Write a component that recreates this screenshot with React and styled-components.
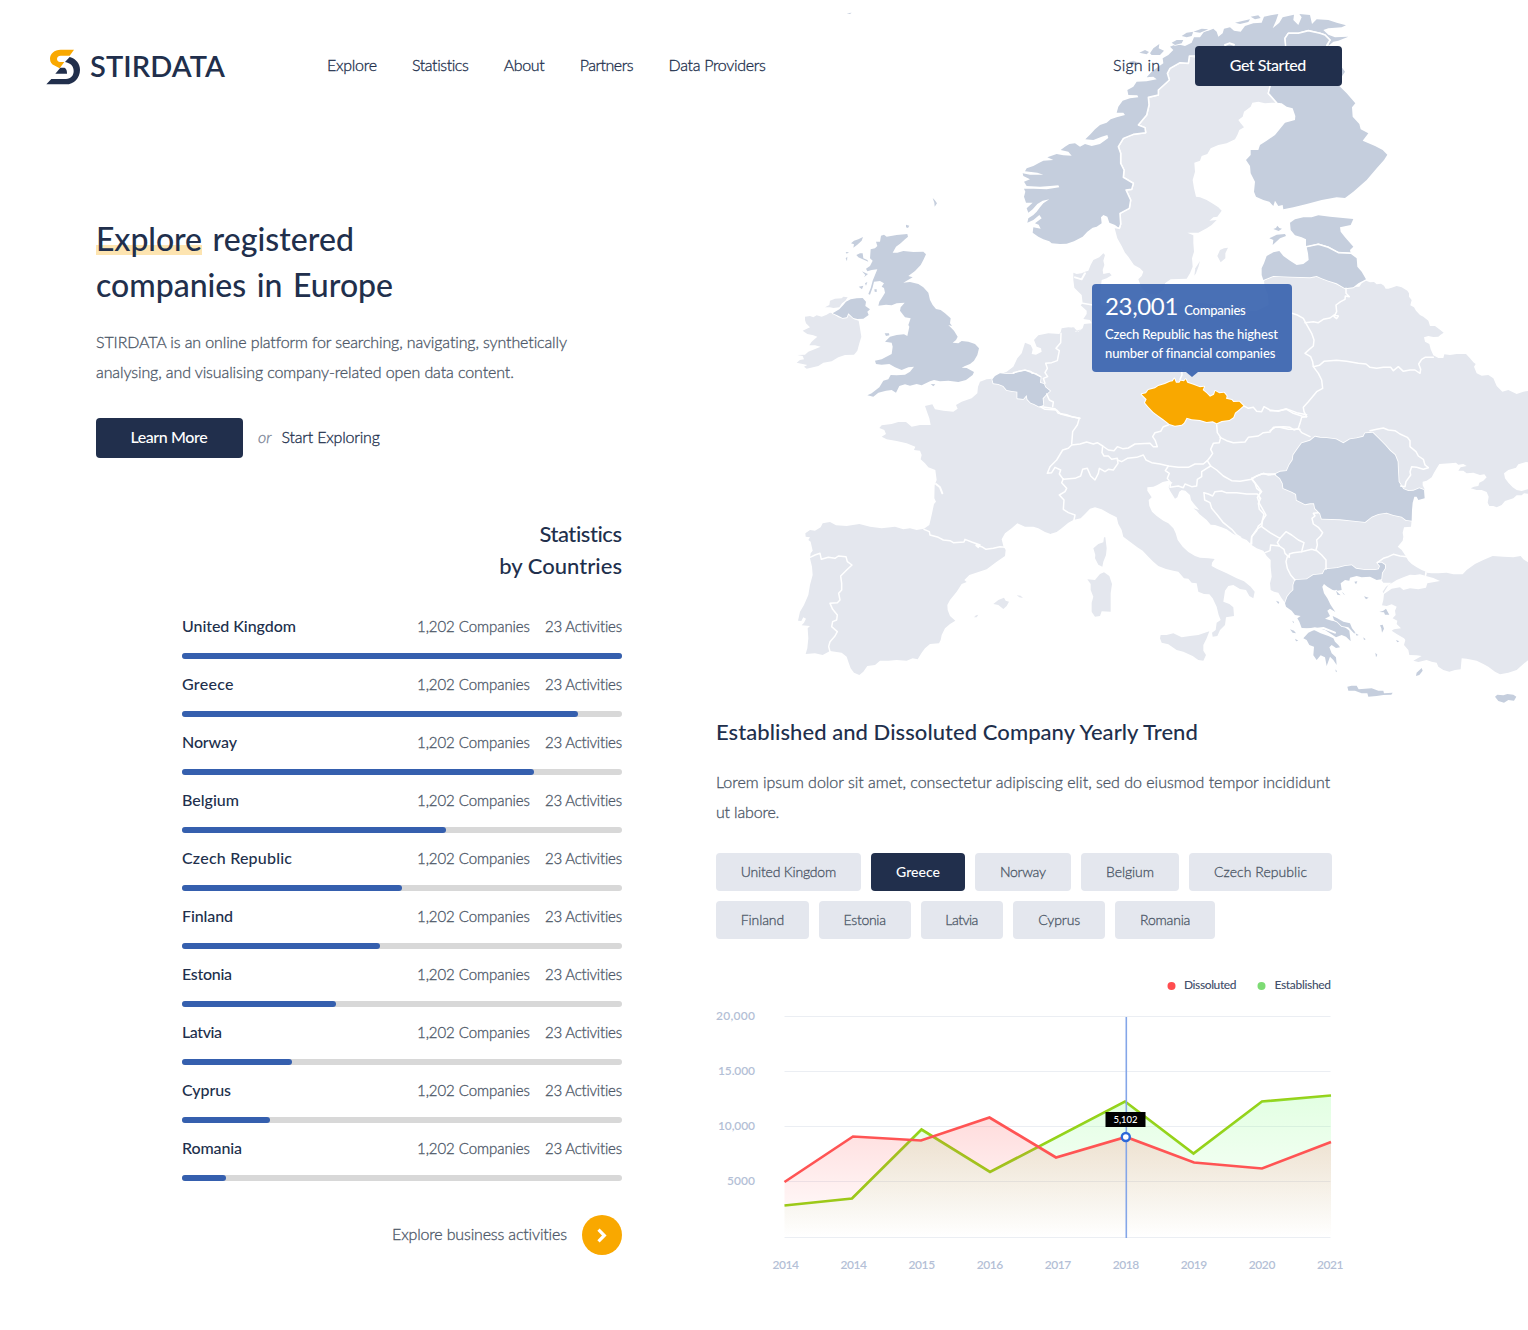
import React from "react";
import styled, { createGlobalStyle } from "styled-components";

const color = {
  navy: "#212f4c",
  body: "#4d5868",
  blue: "#355fae",
  orange: "#f9a800",
  land: "#e4e7ee",
  member: "#c5cedd",
  track: "#d8d8d8",
  axis: "#b4bfd6",
};

const GlobalStyle = createGlobalStyle`
  * { box-sizing: border-box; }
  body {
    margin: 0;
    background: #fff;
    color: ${color.navy};
    font-family: Lato, "Open Sans", sans-serif;
    font-variant-ligatures: none;
  }
  h1, h2, p, ul { margin: 0; padding: 0; }
  ul { list-style: none; }
`;

/* ---------- shared ---------- */

const Page = styled.div`
  position: relative;
  width: 1528px;
  height: 1330px;
  overflow: hidden;
`;

const Tracked = styled.span`
  letter-spacing: ${(p) => p.$ls || 0}px;
  margin-right: ${(p) => -(p.$ls || 0)}px;
  white-space: nowrap;
`;

const Button = styled.button`
  width: 147px;
  height: 40px;
  padding: 0 1px 2px 0;
  border: 0;
  border-radius: 4px;
  background: ${color.navy};
  color: #fff;
  font: 500 16px/38px Lato, sans-serif;
`;

const TextLink = styled.a`
  height: 40px;
  color: ${color.navy};
  font-size: 16px;
  font-weight: 300;
  line-height: 38px;
  -webkit-text-stroke: 0.3px ${color.navy};
`;

const Paragraph = styled.p`
  color: ${color.body};
  font-size: 16px;
  font-weight: 300;
  line-height: 30px;
  -webkit-text-stroke: 0.3px ${color.body};
`;

const SectionTitle = styled.h2`
  font-size: 22px;
  font-weight: 500;
  line-height: 32px;
  text-align: ${(p) => p.$align || "left"};
`;

/* ---------- header ---------- */

const Header = styled.header`
  position: relative;
  display: flex;
  align-items: center;
  height: 86px;
  padding: 46px 186px 0 46px;
`;

const Brand = styled.div`
  display: flex;
  align-items: center;
  width: 281px;
  height: 40px;
`;

const Mark = styled.svg`
  margin-top: 1px;
`;

const Wordmark = styled.span`
  margin-left: 9px;
  font-size: 29px;
  font-weight: 600;
  line-height: 40px;
`;

const Nav = styled.nav`
  display: flex;
  gap: 35px;
`;

const Account = styled.div`
  display: flex;
  align-items: center;
  gap: 35px;
  margin-left: auto;
`;

/* ---------- body ---------- */

const Main = styled.main`
  position: relative;
  display: grid;
  grid-template-columns: 526px 616px;
  column-gap: 94px;
  padding-left: 96px;
`;

const LeftColumn = styled.div`
  padding-top: 130px;
`;

const RightColumn = styled.section`
  padding-top: 630px;
`;

const HeroTitle = styled.h1`
  margin-bottom: 19px;
  font-size: 32px;
  font-weight: 500;
  line-height: 46px;
  word-spacing: 2.5px;
`;

const Highlight = styled.span`
  background: linear-gradient(#fde4b0, #fde4b0) 0 26px / 100% 10px no-repeat;
`;

const HeroActions = styled.div`
  display: flex;
  align-items: center;
  margin-top: 31px;
`;

const Or = styled.em`
  height: 40px;
  margin: 0 10px 0 15px;
  color: #7b8496;
  font-size: 16px;
  font-weight: 300;
  line-height: 38px;
  -webkit-text-stroke: 0.3px #7b8496;
`;

const Statistics = styled.section`
  width: 440px;
  margin: 60px 0 0 86px;
`;

const CountryList = styled.ul`
  margin-top: 29px;
`;

const CountryItem = styled.li`
  height: 58px;
`;

const CountryHead = styled.div`
  display: flex;
  justify-content: space-between;
  height: 30px;
  line-height: 30px;
`;

const CountryName = styled.span`
  font-size: 16px;
  font-weight: 500;
`;

const CountryMeta = styled.span`
  display: flex;
  gap: 15px;
  color: ${color.body};
  font-size: 15px;
  font-weight: 300;
  -webkit-text-stroke: 0.3px ${color.body};
`;

const Track = styled.div`
  height: 6px;
  margin-top: 12px;
  border-radius: 3px;
  background: ${color.track};
`;

const Fill = styled.div`
  height: 6px;
  border-radius: 3px;
  background: ${color.blue};
`;

const ExploreMore = styled.div`
  display: flex;
  justify-content: flex-end;
  gap: 15px;
  margin-top: 24px;
  color: ${color.body};
  font-size: 16px;
  font-weight: 300;
  line-height: 38px;
  -webkit-text-stroke: 0.3px ${color.body};
`;

const RoundButton = styled.button`
  display: grid;
  place-items: center;
  width: 40px;
  height: 40px;
  padding: 0;
  border: 0;
  border-radius: 50%;
  background: ${color.orange};
`;

const TrendText = styled(Paragraph)`
  margin: 19px 0 26px;
`;

const Chips = styled.div`
  display: flex;
  flex-wrap: wrap;
  gap: 10px;
`;

const Chip = styled.button`
  width: ${(p) => p.$width}px;
  height: 38px;
  padding: 0;
  border: 0;
  border-radius: 4px;
  background: ${(p) => (p.$active ? color.navy : color.land)};
  color: ${(p) => (p.$active ? "#fff" : color.body)};
  font: ${(p) => (p.$active ? 500 : 300)} 14px/38px Lato, sans-serif;
  -webkit-text-stroke: ${(p) => (p.$active ? "0" : `0.3px ${color.body}`)};
`;

const ChartSvg = styled.svg`
  display: block;
  margin-top: 21px;
  overflow: visible;
  font-family: Lato, sans-serif;
`;

/* ---------- map ---------- */

const MapLayer = styled.div`
  position: absolute;
  top: 0;
  left: 780px;
  width: 748px;
  height: 710px;
`;

const MapTooltip = styled.div`
  position: absolute;
  top: 284px;
  left: 312px;
  width: 200px;
  height: 88px;
  padding: 7px 13px 0;
  border-radius: 4px;
  background: rgba(53, 96, 173, 0.9);
  color: #fff;
  font-size: 13px;
  font-weight: 500;
  line-height: 19px;

  &::after {
    content: "";
    position: absolute;
    top: 88px;
    left: 94px;
    border: 6px solid transparent;
    border-top: 5px solid rgba(53, 96, 173, 0.9);
    border-bottom: 0;
  }
`;

const TooltipHead = styled.div`
  height: 34px;
  line-height: 29px;
  white-space: nowrap;
`;

const TooltipFigure = styled.span`
  margin-right: 6px;
  font-size: 24px;
  font-weight: 400;
`;

// Map tiles: each outline is listed in the local units (1/3 px) of its region.
const TILES = {
  nordic: [660, 0],
  isles: [0, 570],
  central: [780, 720],
  east: [1470, 600],
  iberia: [0, 1260],
  italy: [780, 1260],
  balkans: [1410, 1260],
};

const points = (...parts) =>
  parts
    .map(([tile, list]) => {
      const [dx, dy] = TILES[tile];
      return list
        .trim()
        .split(/\s+/)
        .map((pair) => {
          const [x, y] = pair.split(",").map(Number);
          return `${x + dx},${y + dy}`;
        })
        .join(" ");
    })
    .join(" ");

const MAINLAND = points(
  ["central", "128,190 125,165 118,158 103,143 100,120 100,98 110,102 125,100 135,95 145,92 152,75 160,60 178,52 190,40 195,45 190,62 193,75 188,90 190,102 208,98 215,106 200,115 185,120 183,138 180,165 184,195 230,205 300,200 330,222 380,215 430,196 480,188 540,196 600,215 650,212 686,195 684,165 674,140 672,122 700,108 740,107 790,110"],
  ["east", "100,230 135,232 145,226 155,236 185,245 205,256 225,266 240,261 268,260 275,250 288,242 300,247 312,246 320,253 333,251 342,257 347,266 355,266 365,263 380,258 395,262 412,272 417,280 417,290 425,300 421,316 432,322 438,332 450,345 460,350 475,362 480,378 495,378 508,388 521,398 512,404 505,410 490,411 475,408 462,412 465,425 478,432 482,448 490,466 505,474 520,474 523,463 540,465 560,462 588,462 600,475 610,487 617,492 612,500 620,520 635,527 655,525 670,535 680,558 697,575 715,570 740,582 760,575 780,572 780,788 768,786 745,793 738,803 715,810 702,820 705,835 715,848 728,862 740,870 755,873 780,866"],
  ["balkans", "840,222 822,220 815,226 800,226 790,235 765,243 755,255 740,262 730,258 718,258 713,248 716,230 710,216 695,210 680,210 662,205 672,200 685,198 688,188 700,182 710,172 703,163 690,165 670,158 650,160 640,152 625,152 632,142 650,138 640,132 625,134 618,128 600,130 568,132 560,145 552,158 545,172 530,182 518,185 518,196 524,208 524,235 505,240 500,232 494,230 488,248 486,270 485,300 483,320 462,322 458,338 460,350 458,362 443,380 455,390 465,405 475,422 485,432 500,442 515,450 530,456 526,467 510,463 495,465 480,464 460,472 440,480 415,496 400,520 398,515 408,500 425,488 400,488 388,472 340,460 300,465 230,480 150,560 105,548 95,535 85,518 72,515 62,510 60,490 65,470 62,440 62,420 50,408 40,392 20,385 5,375"],
  ["italy", "620,360 600,352 580,342 560,328 545,322 525,315 512,314 500,300 478,282 470,272 460,265 478,270 462,252 453,240 450,225 436,212 425,210 418,215 412,232 405,236 398,225 390,212 386,202 388,195 398,188 385,182 368,186 352,195 340,200 322,202 322,212 335,232 326,240 328,258 336,275 350,288 370,302 385,310 400,325 407,340 413,360 428,380 445,396 465,408 480,413 505,415 524,417 516,428 515,438 530,446 560,460 590,475 612,484 632,500 644,515 640,535 628,528 618,510 600,507 580,495 565,498 555,512 550,545 568,552 580,562 582,588 558,592 555,615 540,630 532,648 518,650 516,638 527,630 530,608 542,600 536,585 530,560 518,535 508,523 492,522 475,515 470,490 455,488 445,476 432,475 415,455 400,452 378,447 355,438 340,425 325,410 308,392 292,382 270,365 250,350 245,330 235,312 230,292 210,282 185,268 165,262 150,266 135,282 122,295 100,300 85,308 65,325 50,336 30,342"],
  ["iberia", "812,342 795,336 775,325 760,320 735,320 712,310 695,325 675,340 665,358 670,378 677,390 675,408 650,425 620,448 595,456 568,465 553,480 560,486 545,492 530,515 510,540 502,555 503,570 510,588 526,602 510,612 495,625 485,645 482,660 477,670 450,672 435,685 425,698 413,718 398,715 380,722 350,720 325,722 300,722 285,735 262,738 250,755 238,765 222,758 212,745 205,725 200,710 185,698 150,693 128,705 105,700 77,702 82,685 85,655 83,625 90,618 65,616 72,608 78,596 70,592 64,603 54,602 60,575 72,555 85,525 90,495 98,465 96,440 90,415 92,400 98,392 92,365 85,360 90,352 77,350 76,340 90,330 105,332 122,322 128,310 150,306 168,316 200,318 238,312 270,320 305,325 345,320 370,328 390,325 410,330 432,326 448,315 455,285 462,252 468,245 463,235 464,195 470,180 466,150 445,142 435,130 422,118 425,105 420,92 402,90 406,80 380,70 350,63 320,58 305,50 318,42 313,30 298,24 305,16 335,12 355,6 378,6 395,20 420,15 452,15"],
  ["isles", "452,705 448,685 442,668 435,648 457,643 465,658 490,662 520,665 533,656 528,645 545,635 575,625 592,610 594,590 600,575 620,568 637,566 655,555 680,545 700,530 712,505 725,490 735,458 752,465 758,478 755,492 768,494 785,485 783,475 770,470 762,450 775,436 805,430 838,432 850,414 870,415 880,412 895,425 905,418"],
  ["central", "60,285 65,265 85,262 104,263 106,275 118,272 128,265 132,252 155,250 150,240 130,237 140,222 140,212 122,196"]
);

const LIGHT_SHAPES = [
  // Sweden
  points(["nordic", "860,100 700,140 620,150 585,170 568,168 565,190 540,188 510,205 502,220 508,240 475,270 475,285 445,292 447,315 440,345 415,375 435,383 437,398 400,403 370,415 355,440 362,460 362,490 372,510 370,532 400,550 395,568 378,570 392,600 388,625 360,640 362,672 358,685 344,685 352,715 365,738 375,758 385,770 402,795 420,805 430,815 425,828 415,838 424,862 440,880 470,885 492,868 495,850 512,838 560,836 570,820 578,800 576,775 582,755 580,728 580,706 562,698 595,698 620,685 635,675 650,660 628,662 640,652 652,650 665,632 655,622 640,612 620,600 600,592 588,590 582,565 578,540 585,515 583,488 600,482 605,468 622,462 632,445 655,435 680,430 705,418 712,405 718,390 732,382 722,370 715,360 728,350 732,335 752,320 757,308 775,305 795,310 815,308 832,308 855,250 850,180"]),
  // Ireland
  points(["isles", "75,380 90,378 100,382 110,376 125,380 140,374 150,368 158,370 175,382 190,385 205,372 222,388 236,392 240,415 244,440 238,460 232,482 222,494 195,495 175,502 155,514 130,518 115,528 80,536 72,530 82,525 50,518 60,510 72,508 68,498 52,495 75,494 85,485 98,480 122,470 105,466 88,466 95,455 112,440 100,436 82,432 68,422 90,412 78,400 75,390"]),
  points(["isles", "135,352 148,345 150,332 165,326 185,325 190,320 203,322 196,332 186,340 178,352 160,354 150,352"]),
  // Sicily, Sardinia, Corsica
  points(["italy", "360,655 362,645 380,645 400,640 425,652 450,648 475,645 508,634 500,655 490,675 490,692 498,705 490,722 475,720 458,708 430,695 410,690 385,673 365,668"]),
  points(["italy", "142,478 165,480 180,462 192,457 208,468 216,492 212,520 212,575 185,574 180,588 165,590 155,575 155,548 160,530 152,510 152,492"]),
  points(["italy", "160,385 175,372 190,367 192,352 196,352 200,385 198,405 190,425 187,440 175,434 165,415 166,405"]),
  // Balearics
  points(["iberia", "640,552 655,540 672,533 677,542 687,545 680,558 670,567 655,555"]),
  points(["iberia", "710,526 722,527 729,534 718,532"]),
  points(["iberia", "582,592 588,586 595,584 590,592"]),
  // Gotland, Oland
  points(["nordic", "652,768 660,750 672,745 684,743 676,760 676,775 662,787"]),
  points(["nordic", "583,827 586,805 600,783 596,798 588,820"]),
  // Turkey
  points(["balkans", "530,458 545,460 565,460 590,458 610,463 638,463 650,450 675,432 700,420 728,408 760,410 790,412 812,408 820,418 840,430 840,716 820,732 800,750 775,758 750,763 735,755 715,740 700,732 680,722 650,716 635,715 632,748 615,750 598,755 580,750 565,740 560,728 545,725 530,720 505,726 490,722 515,708 500,706 478,705 475,690 462,675 466,660 462,655 440,642 425,632 432,628 453,625 440,612 442,602 428,595 437,585 435,572 440,560 425,553 410,558 396,556 400,540 402,522 425,506 450,502 460,510 480,505 505,508 528,503 532,490 570,483 550,474 528,468"]),
];

const MEMBER_SHAPES = [
  // Norway
  points(["nordic", "358,685 345,675 328,668 322,650 310,645 303,652 305,670 290,680 278,683 262,695 248,710 222,724 200,731 180,732 155,730 148,724 130,718 115,710 98,698 100,682 122,686 116,674 105,670 118,660 125,655 118,645 100,660 82,668 85,655 100,645 110,635 120,622 130,610 148,598 128,602 112,612 98,628 85,638 80,625 98,608 78,608 72,590 76,575 72,566 100,566 140,568 178,562 175,556 150,558 120,560 80,558 72,545 90,538 70,528 68,520 90,524 130,524 112,518 75,514 80,505 100,498 118,488 130,482 160,480 142,472 170,462 190,466 215,467 205,455 182,450 195,440 208,432 225,430 240,440 255,432 275,438 300,432 325,414 322,405 305,410 280,420 256,418 272,402 285,388 300,375 320,368 332,358 350,352 375,345 370,338 350,338 355,320 368,302 390,295 415,292 412,286 385,285 382,270 400,260 410,245 440,244 470,238 460,230 440,232 455,215 475,200 490,190 488,175 505,165 520,150 510,140 530,132 555,138 575,128 582,112 600,112 612,95 625,92 640,86 650,95 655,110 668,100 672,86 690,82 702,92 722,95 735,78 760,70 785,68 792,50 812,46 835,42 828,62 818,85 838,68 848,52 882,44 880,60 895,75 905,52 898,42 930,45 936,72 950,58 985,60 1010,68 1038,76 1025,82 985,85 970,90 985,104 1005,112 1045,110 1015,122 1000,125 985,138 990,120 975,105 960,100 925,92 895,100 865,100 855,115 857,140 800,160 700,160 620,180 585,170 568,168 565,190 540,188 510,205 502,220 508,240 475,270 475,285 445,292 447,315 440,345 415,375 435,383 437,398 400,403 370,415 355,440 362,460 362,490 372,510 370,532 400,550 395,568 378,570 392,600 388,625 360,640 362,672"]),
  // Norwegian islands
  points(["nordic", "418,158 435,150 447,156 440,163"]),
  points(["nordic", "450,160 460,145 478,132 476,145 492,152 480,165 455,165"]),
  points(["nordic", "515,128 530,120 550,120 545,130 525,135"]),
  points(["nordic", "545,108 560,98 580,95 575,108 560,112"]),
  points(["nordic", "580,95 605,86 625,88 600,98"]),
  points(["nordic", "705,68 730,62 750,58 745,66 720,72"]),
  points(["nordic", "752,50 775,46 782,54 765,58"]),
  points(["nordic", "386,186 400,182 420,190 400,194"]),
  // Finland
  points(["nordic", "855,115 865,100 895,100 925,92 960,100 975,105 990,120 980,136 995,160 1035,215 1022,235 1018,258 1040,280 1066,310 1056,322 1058,350 1078,372 1082,388 1105,400 1088,422 1125,438 1148,450 1162,464 1152,480 1130,505 1100,540 1060,575 1035,594 1010,592 965,600 920,612 880,622 850,628 848,615 835,618 825,602 820,618 808,605 790,600 768,590 762,575 765,545 752,520 750,498 738,480 752,465 752,450 775,450 780,435 800,422 825,405 855,368 885,360 886,348 878,325 860,320 845,310 830,308 805,280 812,258 800,200 860,150"]),
  // Estonia and its islands
  points(["nordic", "870,668 885,658 910,652 935,652 955,646 990,650 1060,657 1052,675 1020,682 1022,695 1035,712 1060,740 1050,750 1052,760 1015,758 985,742 955,735 918,740 918,718 905,712 885,706 872,690"]),
  points(["nordic", "808,715 830,704 855,702 858,708 840,715 818,735 820,720"]),
  points(["nordic", "820,687 828,684 832,677 838,684 846,686 836,693"]),
  // Latvia
  points(["nordic", "785,805 792,790 800,768 820,757 838,753 850,768 870,782 890,795 910,792 926,780 924,760 920,742 955,733 985,742 1015,758 1050,760 1070,775 1072,800 1085,815 1098,838 1075,850 1060,862 1035,865 1010,850 985,842 965,835 950,828 930,832 870,830 820,828 790,840 785,825"]),
  // Great Britain
  points(["isles", "303,137 312,134 320,140 350,135 382,132 384,140 375,148 362,160 348,170 338,188 352,188 370,183 400,186 430,185 438,193 430,210 422,225 405,243 385,258 398,262 370,278 390,276 415,282 430,292 445,308 450,330 458,345 468,357 482,360 495,370 512,385 510,400 516,408 505,405 522,422 533,440 528,450 518,458 535,460 545,453 565,455 585,462 597,475 592,495 582,512 570,522 555,528 545,533 560,534 582,546 578,555 558,570 535,576 505,572 480,574 462,570 450,574 425,586 410,582 390,587 375,583 358,588 348,608 335,600 318,602 295,608 280,620 262,616 275,610 298,592 310,572 325,568 332,555 350,556 375,554 390,545 402,530 385,532 365,540 345,532 328,522 305,524 288,522 285,512 305,508 335,492 338,470 335,458 315,455 330,440 350,435 372,433 382,438 388,410 385,405 392,385 375,382 360,362 362,352 374,338 350,340 335,346 318,344 295,347 298,335 305,325 315,308 312,294 305,290 312,280 300,273 282,275 278,292 270,314 265,312 272,295 278,272 292,238 275,240 262,244 258,236 270,228 278,212 270,205 272,178 285,175 292,168 288,155 300,155"]),
  // Northern Ireland
  points(["isles", "158,370 178,358 190,345 198,335 212,328 230,325 248,324 258,335 256,348 270,358 262,365 266,375 250,386 232,387 220,384 205,370 200,382 188,384 172,376"]),
  points(["isles", "213,160 222,152 235,148 249,141 245,152 232,164 220,173 222,163"]),
  points(["isles", "229,195 240,190 248,190 250,205 262,210 265,215 248,208 235,202"]),
  points(["isles", "246,244 258,250 264,252 252,262 256,255"]),
  points(["isles", "236,290 250,287 246,298"]),
  points(["isles", "255,280 262,276 258,287"]),
  points(["isles", "283,298 290,298 290,306 284,305"]),
  points(["isles", "197,186 207,187 200,191"]),
  points(["isles", "197,205 202,200 201,214"]),
  points(["isles", "314,430 327,430 328,436 318,438"]),
  points(["isles", "378,104 388,107 384,114 378,112"]),
  points(["isles", "458,24 464,30 471,40 464,50 463,38"]),
  points(["isles", "452,582 466,583 460,589"]),
  points(["iberia", "200,-1220 215,-1222 210,-1218"]),
  // Belgium
  points(["isles", "637,568 645,558 660,550 680,552 700,552 715,545 735,542 752,545 755,552 768,552 782,562 780,578 792,582 796,592 810,603 800,612 788,625 790,645 778,650 762,642 752,638 742,628 740,615 730,627 712,625 712,605 695,603 680,600 670,588 655,582 640,580"]),
  // Romania
  points(["balkans", "75,163 90,155 110,153 118,135 128,120 130,105 142,88 155,70 180,62 195,50 210,53 230,54 258,58 280,70 300,58 320,55 340,50 345,40 368,38 385,55 405,75 420,92 435,105 443,125 444,150 446,185 460,207 475,213 490,212 508,205 522,210 524,235 505,240 500,230 493,230 488,248 486,270 485,302 468,300 455,290 430,285 410,278 385,282 365,290 345,306 310,302 270,298 215,296 210,280 195,265 192,250 180,250 165,253 140,240 138,222 125,215 100,205 98,190 90,175"]),
  // Greece
  points(["balkans", "135,480 170,478 190,465 218,462 225,448 262,444 285,438 305,436 318,446 345,450 375,450 386,448 390,438 382,428 395,428 405,435 405,445 396,458 394,478 380,480 360,470 335,472 320,468 300,473 298,482 285,480 272,490 275,510 262,512 248,510 232,500 222,492 217,500 222,520 232,535 242,555 256,576 240,566 232,572 240,588 225,596 245,602 262,605 285,622 298,632 302,664 288,650 275,645 258,652 240,640 225,630 195,622 170,626 155,624 148,605 142,595 152,588 135,585 125,572 108,560 105,550 112,530 120,520 130,510 130,495"]),
  points(["balkans", "160,655 175,638 192,630 212,640 235,648 250,655 255,665 265,675 270,682 258,684 245,675 238,682 245,700 258,712 260,735 250,720 240,710 230,738 225,712 212,706 200,720 190,706 192,680 178,675 170,660"]),
  points(["balkans", "248,588 262,595 280,605 300,610 306,625 322,645 312,640 295,622 275,618 262,605 252,600"]),
  points(["balkans", "292,800 305,797 320,797 326,808 345,806 365,805 385,812 400,812 402,820 428,818 424,824 400,825 380,828 355,830 352,820 335,820 315,812 295,812"]),
  points(["balkans", "498,768 500,758 515,744 518,752 508,765"]),
  points(["balkans", "735,830 742,824 760,826 772,822 790,824 799,830 792,842 775,840 762,848 745,843"]),
  points(["balkans", "388,576 400,572 408,566 412,574 418,584 405,584 402,577"]),
  points(["balkans", "390,616 398,614 402,626 396,638 394,625"]),
  points(["balkans", "78,542 88,546 85,552"]),
  points(["balkans", "120,628 132,632 138,640 128,638"]),
  points(["balkans", "135,656 145,662 138,664"]),
  points(["balkans", "127,602 132,606 130,610"]),
  points(["balkans", "313,485 322,484 318,493"]),
  points(["balkans", "342,529 356,533 348,538"]),
  points(["balkans", "258,512 272,526 262,524"]),
  points(["balkans", "276,515 286,526 280,522"]),
  points(["balkans", "376,698 382,704 378,712"]),
  points(["balkans", "438,660 448,664 442,667"]),
  points(["balkans", "340,652 347,658 342,660"]),
  points(["balkans", "256,748 261,754 258,757"]),
  points(["balkans", "316,640 326,645 320,647"]),
];

const CZECHIA = points(["central", "305,463 318,460 325,450 345,445 355,438 375,432 390,425 398,424 403,416 408,428 418,428 422,422 432,424 437,418 442,428 460,434 480,442 492,440 488,450 500,460 510,470 522,464 526,453 538,460 552,458 560,468 558,476 575,480 580,486 598,485 610,497 598,508 585,518 580,532 568,540 545,543 530,550 518,544 500,546 480,540 455,538 440,533 432,548 425,554 405,557 388,552 370,538 355,527 340,516 325,500 315,488 320,478"]);

const BORDERS = [
  points(["central", "128,190 158,195"]),
  points(["central", "425,390 426,405 420,418"]),
  points(["isles", "843,430 842,458 828,475 838,482 832,512 815,518 797,520 802,535 795,548 803,560 790,565 795,580"]),
  points(["isles", "700,548 735,540 758,548 782,560"]),
  points(["isles", "785,650 825,656 835,670 860,674 875,680 900,685"]),
  points(["isles", "800,612 808,630 820,636 818,650"]),
  points(["central", "0,500 15,508 50,510 62,522 85,528 118,535 112,555 98,575 95,612"]),
  points(["italy", "95,75 120,72 140,66 160,72 172,68 188,78 186,98 192,108 205,108 215,118 232,115 234,130 220,150 205,148 195,155 178,145 175,160 165,180 152,168 142,145 128,148 122,168 105,175 70,178 58,162 62,150 45,142 35,158 22,160 30,140 50,120 68,90 85,85 95,75"]),
  points(["italy", "188,78 205,90 222,92 232,80 248,86 265,84 285,72 330,70 340,80 352,80 346,62 338,50 345,38 362,34 370,20 385,15"]),
  points(["italy", "232,120 245,125 262,115 290,112 310,105 318,120 335,128 360,132 385,138 415,142 445,142 465,132 490,132 502,122 510,112 518,100 512,88 520,70 538,68 542,52 532,38 530,15"]),
  points(["italy", "385,138 376,152 388,160 382,175 392,188 390,202 415,198 430,203 435,192 455,200 470,198 472,178 485,170 485,155 500,145 512,138 502,122"]),
  points(["italy", "512,138 530,150 550,168 575,182 600,184 635,178 650,168 665,162 705,162"]),
  points(["italy", "540,52 560,62 580,68 615,66 625,52 655,48 670,38 690,36 700,22 720,22 745,28 780,28"]),
  points(["central", "610,497 625,505 640,502 650,514 665,515 672,500 690,510 715,514 738,506 770,518 800,524"]),
  points(["east", "0,632 25,632 50,628 70,640 95,648 110,650"]),
  points(["east", "0,692 15,682 40,680 60,682 72,690 85,685 95,698 120,710"]),
  points(["east", "66,340 82,345 100,355 108,370 125,400 132,420 130,438 118,448 105,460 122,470 128,485 130,500 145,520 155,540 158,565 140,575 115,605 100,622 102,635 110,650 95,652 90,670 85,685"]),
  points(["east", "105,368 130,365 145,368 160,358 180,354 192,345 205,348 200,356 192,350 200,335 198,315 212,305 225,298 226,288 238,290 228,280 228,265"]),
  points(["east", "130,500 148,496 162,484 200,481 230,484 265,490 288,492 300,502 320,505 340,502 362,502 370,512 385,500 400,514 420,510 435,510 450,520 452,508 446,492 455,478 465,472 490,472"]),
  points(["east", "300,692 320,688 340,684 355,690 375,692 390,702 412,712 420,722 420,740 438,755 445,768 460,778 465,795 475,803 460,808 440,802 425,800 420,815 422,825 408,845 405,860 392,858"]),
  points(["italy", "492,218 505,222 518,228 525,215 545,213 558,218 590,218 620,222 652,222 662,235 655,250 658,268 672,282 665,310 655,318 650,332 635,350 632,375"]),
  points(["italy", "492,218 494,240 510,248 515,265 532,285 550,308 575,328 590,345 602,352"]),
  points(["italy", "635,178 645,190 650,205 662,215 655,228 660,236"]),
  points(["balkans", "5,175 20,195 35,215 22,232 28,250 48,285 38,300 35,320 60,338 90,355 108,335 125,345 145,360 162,368 155,395 130,398 118,402 118,412 105,400 102,388 88,378 62,375 60,392 45,398"]),
  points(["balkans", "35,318 20,328 5,350 5,372"]),
  points(["balkans", "90,355 82,368 88,378"]),
  points(["balkans", "112,410 108,425 112,445 122,465 135,480"]),
  points(["balkans", "155,395 185,388 200,392 215,405 228,420 228,448"]),
  points(["balkans", "198,390 202,375 200,360 212,348 218,338 205,322 190,312 186,295 195,288 190,280 205,278"]),
  points(["balkans", "382,428 400,415 415,410 430,403 450,408 470,410"]),
  points(["balkans", "75,163 55,165 40,160 20,168 5,175"]),
  points(["iberia", "432,328 448,335 450,345 475,352 490,360 510,362 520,368 552,366 555,358 575,366 592,372 600,375 595,382 588,376 605,380 618,388 640,385 660,380 677,382"]),
  points(["iberia", "90,412 105,405 120,400 124,418 145,412 165,415 175,408 198,410 202,425 216,435 200,450 182,468 185,490 185,510 176,520 180,540 172,548 150,550 158,568 172,585 170,600 158,605 155,620 172,635 165,648 150,665 146,680 150,695"]),
  points(["iberia", "850,176 845,188 860,205 855,215 838,225 852,240 850,268 865,278 885,285 882,300"]),
  points(["balkans", "528,455 526,470"]),
];

const NOTCHES = [
  points(["iberia", "468,192 480,202 487,220"]),
  points(["nordic", "675,135 688,130 702,134"]),
  points(["balkans", "155,628 190,628 220,624 255,638"]),
  points(["central", "105,112 125,118 135,100"]),
];

function EuropeMap() {
  return (
    <MapLayer>
      <svg width="748" height="710" viewBox="0 0 2244 2130" strokeLinejoin="round" strokeLinecap="round">
        <g fill={color.land}>
          <polygon points={MAINLAND} />
          {LIGHT_SHAPES.map((shape, i) => (
            <polygon key={i} points={shape} />
          ))}
        </g>
        <g fill={color.member} stroke="#fff" strokeWidth="5" paintOrder="stroke">
          {MEMBER_SHAPES.map((shape, i) => (
            <polygon key={i} points={shape} />
          ))}
        </g>
        <g fill="none" stroke="#fff" strokeWidth="4.5">
          {BORDERS.map((line, i) => (
            <polyline key={i} points={line} />
          ))}
          <polyline points={points(["nordic", "700,160 620,180 585,168 568,168 565,190 540,188 510,205 502,220 508,240 475,270 475,285 445,292 447,315 440,345 415,375 435,383 437,398 400,403 370,415 355,440 362,460 362,490 372,510 370,532 400,550 395,568 378,570 392,600 388,625 360,640 362,672 358,685 345,682"])} />
          <polyline points={points(["nordic", "857,140 855,115 865,100 895,100 925,92 960,100 975,105 990,120 980,136"])} />
          <polyline points={points(["nordic", "812,250 805,280 830,308"])} />
          <polyline points={points(["nordic", "918,740 955,733 985,742 1015,758 1052,760"])} />
        </g>
        <g fill="none" stroke="#fff" strokeWidth="6">
          {NOTCHES.map((line, i) => (
            <polyline key={i} points={line} />
          ))}
        </g>
        <polygon points={CZECHIA} fill={color.orange} stroke="#fff" strokeWidth="6" paintOrder="stroke" />
      </svg>
      <MapTooltip>
        <TooltipHead>
          <TooltipFigure>
            <Tracked $ls={-0.35}>23,001</Tracked>
          </TooltipFigure>
          <Tracked $ls={-0.25}>Companies</Tracked>
        </TooltipHead>
        <div>
          <Tracked $ls={-0.14}>Czech Republic has the highest</Tracked>
        </div>
        <div>
          <Tracked $ls={-0.14}>number of financial companies</Tracked>
        </div>
      </MapTooltip>
    </MapLayer>
  );
}

/* ---------- chart ---------- */

const GRID = [
  { y: 56.5, label: "20,000", x: 0, w: 39 },
  { y: 111.5, label: "15.000", x: 2, w: 37 },
  { y: 166.5, label: "10,000", x: 2, w: 37 },
  { y: 221.5, label: "5000", x: 11, w: 28 },
  { y: 277.5 },
];

const YEARS = ["2014", "2014", "2015", "2016", "2017", "2018", "2019", "2020", "2021"];

const DISSOLUTED = "68.5,222 137,176.5 205,180.5 273.5,157.5 340,197.5 410,177 478,202.5 546,208.5 615,182";
const ESTABLISHED = "68.5,245.5 136,238.5 205.5,169.5 274,212 409,141.5 477.5,193.5 546,141.5 615,135.5";

function TrendChart() {
  return (
    <ChartSvg width="616" height="320" viewBox="0 0 616 320">
      <defs>
        <linearGradient id="redFade" gradientUnits="userSpaceOnUse" x1="0" y1="157" x2="0" y2="277">
          <stop offset="0" stopColor="#ff4d4f" stopOpacity="0.2" />
          <stop offset="1" stopColor="#ff4d4f" stopOpacity="0" />
        </linearGradient>
        <linearGradient id="greenFade" gradientUnits="userSpaceOnUse" x1="0" y1="136" x2="0" y2="277">
          <stop offset="0" stopColor="#7dff7d" stopOpacity="0.22" />
          <stop offset="1" stopColor="#7dff7d" stopOpacity="0" />
        </linearGradient>
      </defs>

      <g fontSize="12" fontWeight="500" fill="#434f6b">
        <circle cx="455.5" cy="26" r="4" fill="#ff4d4f" />
        <text x="468" y="29.3" textLength="52.5">Dissoluted</text>
        <circle cx="545.5" cy="26" r="4" fill="#7ddb74" />
        <text x="558.5" y="29.3" textLength="56.5">Established</text>
      </g>

      {GRID.map(({ y, label, x, w }) => (
        <g key={y}>
          <line x1="68.5" x2="614.5" y1={y} y2={y} stroke="#ebeef3" />
          {label && (
            <text x={x} y={y + 3.3} fontSize="12" fontWeight="600" fill={color.axis} textLength={w}>
              {label}
            </text>
          )}
        </g>
      ))}

      <polyline points={ESTABLISHED} fill="none" stroke="#97cf12" strokeWidth="2.7" />
      <polygon points={`68.5,277 ${ESTABLISHED} 615,277`} fill="url(#greenFade)" />
      <polygon points={`68.5,277 ${DISSOLUTED} 615,277`} fill="url(#redFade)" />
      <polyline points={DISSOLUTED} fill="none" stroke="#ff5454" strokeWidth="2.7" />

      <line x1="410.3" x2="410.3" y1="57" y2="278" stroke="#84a6e8" strokeWidth="1.6" />
      <rect x="389.5" y="152" width="40" height="15" fill="#000" />
      <text x="397.5" y="163" fontSize="9.5" fontWeight="500" fill="#fff" textLength="24">5,102</text>
      <circle cx="409.8" cy="177" r="4" fill="#fff" stroke="#2c68d8" strokeWidth="2.4" />

      {YEARS.map((year, i) => (
        <text key={i} x={56.5 + i * 68.05} y="308.8" fontSize="12" fontWeight="600" fill={color.axis} textLength="26.5">
          {year}
        </text>
      ))}
    </ChartSvg>
  );
}

/* ---------- data ---------- */

const NAV = [
  ["Explore", -0.27],
  ["Statistics", -0.42],
  ["About", -0.36],
  ["Partners", -0.52],
  ["Data Providers", -0.3],
];

const COUNTRIES = [
  { name: "United Kingdom", ls: -0.06, share: 100 },
  { name: "Greece", ls: 0.29, share: 90 },
  { name: "Norway", ls: -0.12, share: 80 },
  { name: "Belgium", ls: 0, share: 60 },
  { name: "Czech Republic", ls: 0.21, share: 50 },
  { name: "Finland", ls: -0.1, share: 45 },
  { name: "Estonia", ls: -0.29, share: 35 },
  { name: "Latvia", ls: -0.42, share: 25 },
  { name: "Cyprus", ls: -0.09, share: 20 },
  { name: "Romania", ls: -0.12, share: 10 },
];

const CHIPS = [
  { name: "United Kingdom", ls: -0.2, width: 145 },
  { name: "Greece", ls: 0.04, width: 94, active: true },
  { name: "Norway", ls: -0.28, width: 96 },
  { name: "Belgium", ls: -0.06, width: 98 },
  { name: "Czech Republic", ls: 0.06, width: 143 },
  { name: "Finland", ls: -0.1, width: 93 },
  { name: "Estonia", ls: -0.3, width: 91.5 },
  { name: "Latvia", ls: -0.5, width: 82.7 },
  { name: "Cyprus", ls: -0.11, width: 92 },
  { name: "Romania", ls: -0.2, width: 100 },
];

export default function App() {
  return (
    <Page>
      <GlobalStyle />
      <EuropeMap />

      <Header>
        <Brand>
          <Mark width="35" height="36" viewBox="48 55 105 108">
            <path d="M132 57H92C73 57 60 69 60 84c0 11 6 17 12 20l17 9 14-19H90c-5 0-9-4-9-9 0-6 4-10 11-10h27z" fill={color.orange} />
            <path d="M119 79c19 5 31 20 31 38 0 25-18 44-42 44H49l15-16h44c15 0 23-11 23-24 0-14-9-24-26-27z" fill={color.navy} />
            <path d="M76 129l15-18h10c7 0 10 7 10 18z" fill={color.navy} />
          </Mark>
          <Wordmark>
            <Tracked $ls={0.1}>STIRDATA</Tracked>
          </Wordmark>
        </Brand>
        <Nav>
          {NAV.map(([label, ls]) => (
            <TextLink key={label}>
              <Tracked $ls={ls}>{label}</Tracked>
            </TextLink>
          ))}
        </Nav>
        <Account>
          <TextLink>
            <Tracked $ls={0.22}>Sign in</Tracked>
          </TextLink>
          <Button>
            <Tracked $ls={-0.46}>Get Started</Tracked>
          </Button>
        </Account>
      </Header>

      <Main>
        <LeftColumn>
          <HeroTitle>
            <Highlight>
              <Tracked $ls={-0.09}>Explore</Tracked>
            </Highlight>{" "}
            <Tracked $ls={0.05}>registered</Tracked>
            <br />
            <Tracked $ls={0}>companies in Europe</Tracked>
          </HeroTitle>
          <Paragraph>
            <Tracked $ls={-0.12}>STIRDATA is an online platform for searching, navigating, synthetically</Tracked>
            <br />
            <Tracked $ls={-0.1}>analysing, and visualising company-related open data content.</Tracked>
          </Paragraph>
          <HeroActions>
            <Button>
              <Tracked $ls={-0.4}>Learn More</Tracked>
            </Button>
            <Or>or</Or>
            <TextLink>
              <Tracked $ls={-0.2}>Start Exploring</Tracked>
            </TextLink>
          </HeroActions>

          <Statistics>
            <SectionTitle $align="right">
              <Tracked $ls={-0.44}>Statistics</Tracked>
              <br />
              <Tracked $ls={0.03}>by Countries</Tracked>
            </SectionTitle>
            <CountryList>
              {COUNTRIES.map(({ name, ls, share }) => (
                <CountryItem key={name}>
                  <CountryHead>
                    <CountryName>
                      <Tracked $ls={ls}>{name}</Tracked>
                    </CountryName>
                    <CountryMeta>
                      <Tracked $ls={-0.07}>1,202 Companies</Tracked>
                      <Tracked $ls={-0.22}>23 Activities</Tracked>
                    </CountryMeta>
                  </CountryHead>
                  <Track>
                    <Fill style={{ width: `${share}%` }} />
                  </Track>
                </CountryItem>
              ))}
            </CountryList>
            <ExploreMore>
              <Tracked $ls={-0.16}>Explore business activities</Tracked>
              <RoundButton aria-label="Explore business activities">
                <svg width="13" height="15" viewBox="0 0 13 15" fill="none" stroke="#fff" strokeWidth="3.2">
                  <path d="M2.5 1.7 8.3 7.5l-5.8 5.8" />
                </svg>
              </RoundButton>
            </ExploreMore>
          </Statistics>
        </LeftColumn>

        <RightColumn>
          <SectionTitle>
            <Tracked $ls={0.06}>Established and Dissoluted Company Yearly Trend</Tracked>
          </SectionTitle>
          <TrendText>
            <Tracked $ls={-0.01}>
              Lorem ipsum dolor sit amet, consectetur adipiscing elit, sed do eiusmod tempor incididunt
            </Tracked>
            <br />
            <Tracked $ls={-0.18}>ut labore.</Tracked>
          </TrendText>
          <Chips>
            {CHIPS.map(({ name, ls, width, active }) => (
              <Chip key={name} $width={width} $active={active}>
                <Tracked $ls={ls}>{name}</Tracked>
              </Chip>
            ))}
          </Chips>
          <TrendChart />
        </RightColumn>
      </Main>
    </Page>
  );
}
